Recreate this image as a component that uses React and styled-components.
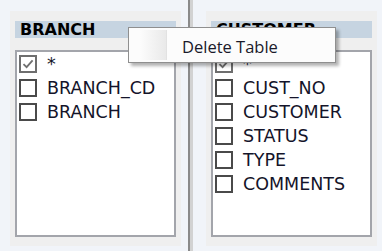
import React from 'react'
import styled, { createGlobalStyle } from 'styled-components'

const GlobalStyle = createGlobalStyle`
  html, body {
    margin: 0;
    padding: 0;
    background: #f1f4f9;
    overflow: hidden;
  }
`

const Screen = styled.div`
  position: relative;
  display: flex;
  width: 382px;
  height: 251px;
  background: #f1f4f9;
  font-family: 'DejaVu Sans', Verdana, sans-serif;
`

const Panel = styled.div`
  box-sizing: border-box;
  margin-top: 11px;
  margin-left: ${p => p.$offset}px;
  width: 171px;
  height: 235px;
  background: #efefef;
  padding: 10px 5px 9px 5px;
  display: flex;
  flex-direction: column;
`

const Header = styled.div`
  height: 17px;
  line-height: 18px;
  background: #c6d4e1;
  padding-left: 5px;
  font-weight: bold;
  font-size: 16px;
  color: #000;
  overflow: hidden;
  white-space: nowrap;
`

const List = styled.div`
  margin-top: 12px;
  flex: 1;
  background: #fff;
  border: 2px solid #a3a5ab;
  padding: 0 2px;
  display: flex;
  flex-direction: column;
`

const Row = styled.div`
  height: 24px;
  display: flex;
  align-items: center;
  gap: 10px;
  font-size: 17.5px;
  color: #14142a;
  white-space: nowrap;
`

const Box = styled.span`
  box-sizing: border-box;
  width: 18px;
  height: 18px;
  flex: none;
  border: 2px solid ${p => (p.$checked ? '#6e6e6e' : '#4a4a4a')};
  background: #fff;
  display: flex;
  align-items: center;
  justify-content: center;
`

const Divider = styled.div`
  box-sizing: border-box;
  margin-left: 7px;
  width: 5px;
  height: 251px;
  border-left: 2px solid #8a8a8a;
  background: #d2d2d2;
`

const Menu = styled.div`
  position: absolute;
  left: 128px;
  top: 27px;
  width: 208px;
  height: 36px;
  box-sizing: border-box;
  background: #fcfcfc;
  border: 1px solid #8f8f8f;
  box-shadow: 3px 3px 3px rgba(0, 0, 0, 0.3);
  display: flex;
  align-items: center;
  font-family: 'Open Sans', 'Noto Sans', sans-serif;
  font-size: 16.5px;
  color: #1a1a2a;
`

const Gutter = styled.div`
  align-self: stretch;
  margin: 2px 0 2px 11px;
  width: 26px;
  background: linear-gradient(to right, #fcfcfc, #e9e9e9);
  border-right: 1px solid #e2e2e2;
`

const MenuLabel = styled.span`
  margin-left: 15px;
  padding-top: 2px;
`

const Check = () => (
  <svg width="12" height="12" viewBox="0 0 12 12">
    <path d="M1.5 6.2 L4.6 9.2 L10.6 2.4" fill="none" stroke="#707070" strokeWidth="1.8" />
  </svg>
)

const Table = ({ name, fields, offset }) => (
  <Panel $offset={offset}>
    <Header>{name}</Header>
    <List>
      <Row>
        <Box $checked>
          <Check />
        </Box>
        *
      </Row>
      {fields.map(f => (
        <Row key={f}>
          <Box />
          {f}
        </Row>
      ))}
    </List>
  </Panel>
)

export default function App() {
  return (
    <>
      <GlobalStyle />
      <Screen>
        <Table name="BRANCH" fields={['BRANCH_CD', 'BRANCH']} offset={10} />
        <Divider />
        <Table name="CUSTOMER" fields={['CUST_NO', 'CUSTOMER', 'STATUS', 'TYPE', 'COMMENTS']} offset={13} />
        <Menu>
          <Gutter />
          <MenuLabel>Delete Table</MenuLabel>
        </Menu>
      </Screen>
    </>
  )
}
